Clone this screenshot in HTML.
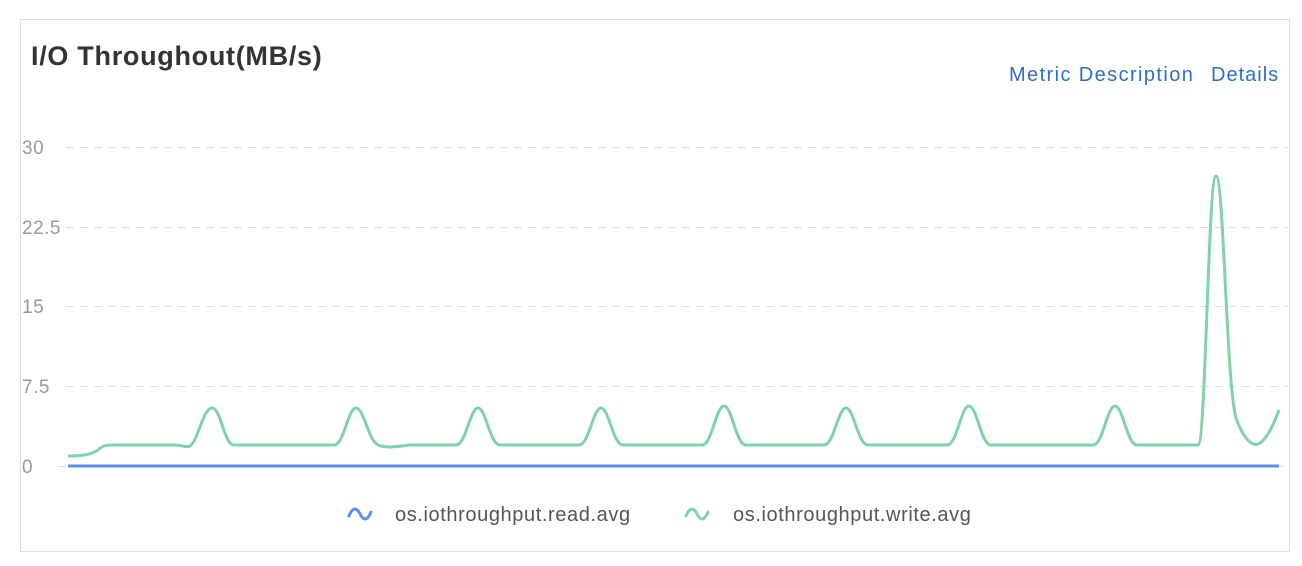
<!DOCTYPE html>
<html><head><style>
body{margin:0;background:#fff;width:1302px;height:566px;overflow:hidden;font-family:"Liberation Sans",sans-serif}
.card{position:absolute;left:20px;top:19px;width:1268px;height:531px;border:1px solid #ddd}
.t{position:absolute;left:31px;top:41px;font-size:27px;font-weight:bold;color:#333;letter-spacing:0.7px}
.l{position:absolute;top:64px;font-size:20px;color:#2f6fc9;letter-spacing:1.4px;white-space:nowrap}
</style></head><body>
<div class="card"></div>
<div class="t">I/O Throughout(MB/s)</div>
<div class="l" style="left:1009px">Metric Description</div>
<div class="l" style="left:1211px;letter-spacing:1px">Details</div>
<svg width="1302" height="566" style="position:absolute;left:0;top:0">
<g stroke="#ddd" stroke-width="1" stroke-dasharray="8,6">
<line x1="66" x2="1288" y1="147.5" y2="147.5"/>
<line x1="66" x2="1288" y1="227.5" y2="227.5"/>
<line x1="66" x2="1288" y1="306.5" y2="306.5"/>
<line x1="66" x2="1288" y1="386.5" y2="386.5"/>
<line x1="58" x2="1288" y1="466.5" y2="466.5"/>
</g>
<g font-size="19" fill="#999" font-family="Liberation Sans,sans-serif" letter-spacing="0.5">
<text x="22" y="154">30</text><text x="22" y="234">22.5</text><text x="22" y="313">15</text><text x="22" y="393">7.5</text><text x="22" y="473">0</text>
</g>
<line x1="68" x2="1279" y1="466" y2="466" stroke="#5b8ff0" stroke-width="3"/>
<path fill="none" stroke="#7ed3a9" stroke-width="3" d="M68 456 C85 456 92 454 98 450 C102 446 105 445 112 445 L175 445 C182 445 186 448 190 446
C198 441 203 408 212 408 C221 408 224 445 234 445 L334 445
C344 445 348 408 356 408 C364 408 368 440 378 445 C388 449 400 446 410 445 L456 445
C466 445 470 408 478 408 C486 408 490 445 500 445 L579 445
C589 445 593 408 601 408 C609 408 613 445 623 445 L702 445
C712 445 716 406 724 406 C732 406 736 445 746 445 L824 445
C834 445 838 408 846 408 C854 408 858 445 868 445 L947 445
C957 445 961 406 969 406 C977 406 981 445 991 445 L1093 445
C1103 445 1107 406 1115 406 C1123 406 1127 445 1137 445 L1198 445
C1206 445 1208 176 1216 176 C1224 176 1226 380 1236 418 C1244 440 1252 446 1258 444 C1266 441 1273 426 1279 410"/>
<path fill="none" stroke="#5b8ff0" stroke-width="3" stroke-linecap="round" d="M349 516 C353 506 357 508 360 514 C363 520 367 522 371 512"/>
<path fill="none" stroke="#7ed3a9" stroke-width="3" stroke-linecap="round" d="M686 516 C690 506 694 508 697 514 C700 520 704 522 708 512"/>
<g font-size="20" fill="#555" font-family="Liberation Sans,sans-serif" letter-spacing="0.6">
<text x="395" y="521">os.iothroughput.read.avg</text>
<text x="733" y="521">os.iothroughput.write.avg</text>
</g>
</svg>
</body></html>
